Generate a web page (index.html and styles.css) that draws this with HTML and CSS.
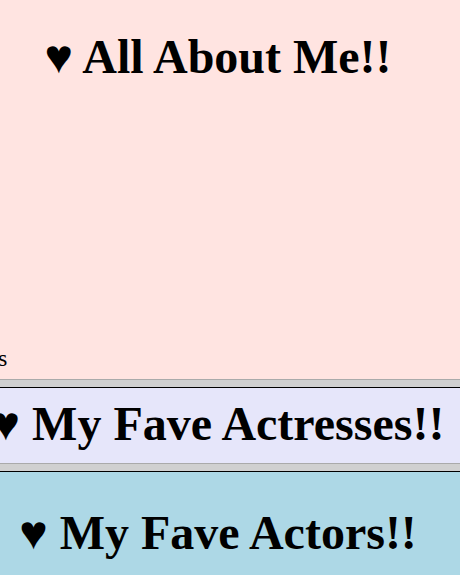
FILE: index.html
```html
<!DOCTYPE html>
<html>
<head>
<meta charset="utf-8">
<link rel="stylesheet" href="styles.css">
</head>
<body>
<section class="panel about">
  <h1 class="title">♥ All About Me!!</h1>
  <div class="ticker"><span class="ticker-text">s</span></div>
</section>
<div class="sep"></div>
<section class="panel actresses">
  <h1 class="title">♥ My Fave Actresses!!</h1>
</section>
<div class="sep"></div>
<section class="panel actors">
  <h1 class="title">♥ My Fave Actors!!</h1>
</section>
</body>
</html>
```
FILE: styles.css
```css
html, body {
  margin: 0;
  padding: 0;
}
body {
  font-family: "Liberation Serif", "Times New Roman", serif;
  color: #000;
  background: #add8e6;
  overflow: hidden;
}
.panel {
  padding-right: 24px;
}
.title {
  margin: 0;
  font-size: 48px;
  font-weight: bold;
  line-height: 55px;
  white-space: nowrap;
  display: flex;
  justify-content: center;
}
.about {
  background: #ffe4e1;
  height: 379px;
  box-sizing: border-box;
  display: flex;
  flex-direction: column;
  justify-content: space-between;
  padding-top: 29px;
  padding-bottom: 7px;
}
.ticker {
  font-size: 24px;
  line-height: 28px;
  overflow: hidden;
  white-space: nowrap;
}
.ticker-text {
  display: inline-block;
  margin-left: -2px;
}
.sep {
  height: 7px;
  background: #d0d0d0;
  border-top: 1px solid #aaaaaa;
  border-bottom: 1px solid #000;
}
.actresses {
  background: #e6e6fa;
  height: 75px;
  box-sizing: border-box;
  padding-top: 8px;
}
.actors {
  background: #add8e6;
  padding-top: 33px;
  height: 70px;
}
```
